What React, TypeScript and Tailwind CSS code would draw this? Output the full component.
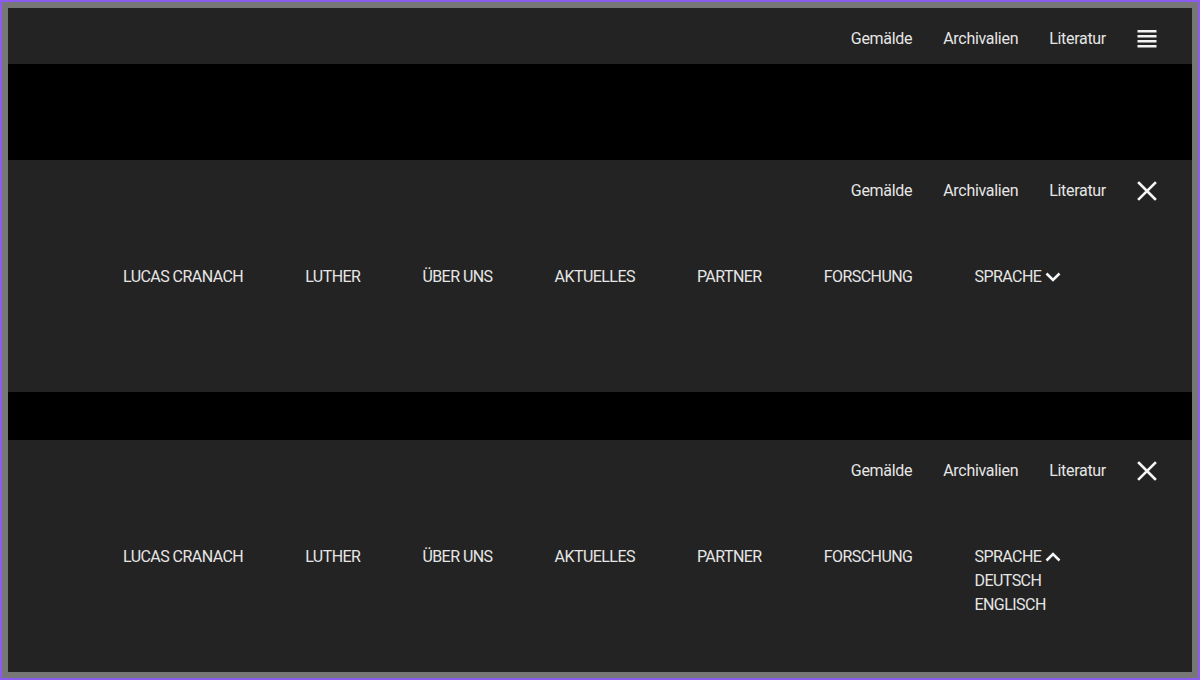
import React from 'react';

const topLinks = ['Gemälde', 'Archivalien', 'Literatur'];
const mainLinks = ['LUCAS CRANACH', 'LUTHER', 'ÜBER UNS', 'AKTUELLES', 'PARTNER', 'FORSCHUNG'];

function BurgerIcon() {
  return (
    <svg width="20" height="18" viewBox="0 0 20 18" className="block">
      <rect x="0.5" y="0" width="19" height="2.5" fill="#f2f2f2" />
      <rect x="0.5" y="5" width="19" height="2.5" fill="#f2f2f2" />
      <rect x="0.5" y="10" width="19" height="2.5" fill="#f2f2f2" />
      <rect x="0.5" y="15" width="19" height="2.5" fill="#f2f2f2" />
    </svg>
  );
}

function CloseIcon() {
  return (
    <svg width="20" height="20" viewBox="0 0 20 20" className="block">
      <path d="M2 2 L18 18 M18 2 L2 18" stroke="#f5f5f5" strokeWidth="2.6" strokeLinecap="square" fill="none" />
    </svg>
  );
}

function Chevron({ up }: { up?: boolean }) {
  return (
    <svg width="16" height="10" viewBox="0 0 16 10" className="block">
      <path
        d={up ? 'M1.5 8.5 L8 2 L14.5 8.5' : 'M1.5 1.5 L8 8 L14.5 1.5'}
        stroke="#f5f5f5"
        strokeWidth="2.6"
        fill="none"
      />
    </svg>
  );
}

function TopBar({ open }: { open: boolean }) {
  return (
    <div className="flex h-14 items-center justify-end gap-[31px] pr-[35px] pt-[6px] tracking-[-0.3px]">
      {topLinks.map((l) => (
        <span key={l}>{l}</span>
      ))}
      {open ? <CloseIcon /> : <BurgerIcon />}
    </div>
  );
}

function MenuPanel({ langOpen }: { langOpen: boolean }) {
  return (
    <div className="h-[232px] bg-[#232323]">
      <TopBar open />
      <div className="flex items-start gap-[62px] pl-[115px] pt-[49px] uppercase tracking-[-0.55px]">
        {mainLinks.map((l) => (
          <span key={l} className="leading-6">{l}</span>
        ))}
        <div className="flex flex-col leading-6">
          <div className="flex items-center gap-1">
            <span>SPRACHE</span>
            <Chevron up={langOpen} />
          </div>
          {langOpen && (
            <>
              <span>DEUTSCH</span>
              <span>ENGLISCH</span>
            </>
          )}
        </div>
      </div>
    </div>
  );
}

export default function App() {
  return (
    <div className="h-[680px] w-[1200px] border-2 border-[#8c5cf0] bg-[#777777] p-[6px]">
      <div
        className="flex h-full flex-col bg-black text-[16px] text-[#e6e6e6]"
        style={{ fontFamily: 'Roboto, "Open Sans", sans-serif' }}>
        <div className="bg-[#232323]">
          <TopBar open={false} />
        </div>
        <div className="h-24" />
        <MenuPanel langOpen={false} />
        <div className="h-12" />
        <MenuPanel langOpen />
      </div>
    </div>
  );
}
